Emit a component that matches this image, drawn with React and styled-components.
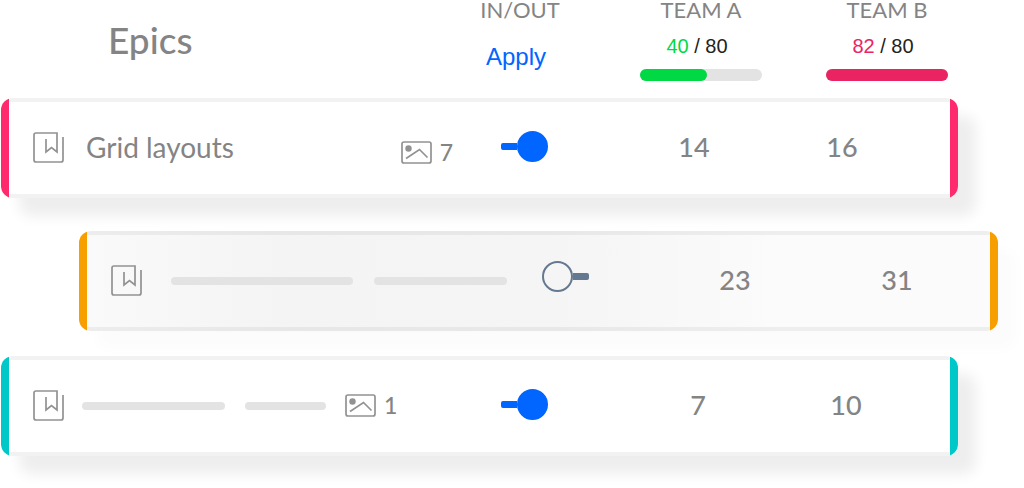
import React, { useState } from 'react';
import styled, { createGlobalStyle } from 'styled-components';

const GlobalStyle = createGlobalStyle`
  *,
  *::before,
  *::after {
    box-sizing: border-box;
  }

  body {
    margin: 0;
    background: #fff;
    color: #848484;
    font-family: Lato, 'Liberation Sans', sans-serif;
    overflow-x: hidden;
  }
`;

const Board = styled.main`
  width: 100%;
  padding-bottom: 31px;
`;

const Header = styled.header`
  display: flex;
  align-items: flex-start;
  padding: 0 76px 17px 108px;
`;

const Title = styled.h1`
  flex: 1;
  margin: 20px 0 0;
  font-size: 37px;
  font-weight: 500;
  line-height: 40px;
`;

const Column = styled.div`
  display: flex;
  flex-direction: column;
  align-items: center;
  width: ${({ $wide }) => ($wide ? '122px' : '80px')};
  margin-left: 64px;
  white-space: nowrap;

  &:first-of-type {
    margin-left: 0;
    margin-right: 16px;
  }
`;

const ColumnTitle = styled.h2`
  margin: 0;
  font-size: 22px;
  font-weight: 400;
  line-height: 20px;
`;

const ApplyButton = styled.button`
  margin-top: 23px;
  padding: 0 8px 0 0;
  border: 0;
  background: none;
  color: #0066ff;
  font-family: 'Liberation Sans', sans-serif;
  font-size: 24px;
  line-height: 28px;
  cursor: pointer;
`;

const Capacity = styled.div`
  margin-top: 14px;
  padding-right: 8px;
  color: #222;
  font-family: 'Liberation Sans', sans-serif;
  font-size: 20px;
  line-height: 24px;

  span {
    color: ${({ $color }) => $color};
  }
`;

const Track = styled.div`
  width: 100%;
  height: 12px;
  margin-top: 11px;
  border-radius: 6px;
  background: #e3e3e3;
`;

const Fill = styled.div`
  height: 100%;
  border-radius: 6px;
  background: ${({ $color }) => $color};
`;

const EpicList = styled.ul`
  margin: 0;
  padding: 0;
  list-style: none;
`;

const Card = styled.li`
  display: flex;
  height: 100px;
  margin: ${({ $shifted }) => ($shifted ? '33px 26px 25px 79px' : '0 66px 0 1px')};
  border-radius: 12px;
  overflow: hidden;
  background: ${({ $shifted }) =>
    $shifted
      ? 'linear-gradient(90deg, #fafafa 0%, #f4f4f4 22%, #f5f5f5 52%, #fbfbfb 76%)'
      : '#fff'};
  box-shadow: 18px 18px 14px
    ${({ $shifted }) => ($shifted ? 'rgba(0, 0, 0, 0.015)' : 'rgba(0, 0, 0, 0.07)')};
`;

const Edge = styled.div`
  flex: none;
  width: 8px;
  background: ${({ $color }) => $color};
`;

const CardBody = styled.div`
  display: flex;
  flex: 1;
  align-items: center;
  min-width: 0;
  padding: 0 ${({ $end }) => $end}px 2px 24px;
  border: solid rgba(0, 0, 0, 0.05);
  border-width: 4px 0;
`;

const Summary = styled.div`
  display: flex;
  flex: 1;
  align-items: center;
  min-width: 0;

  > svg {
    flex: none;
  }
`;

const EpicName = styled.span`
  margin-left: 22px;
  font-size: 28px;
  line-height: 32px;
  white-space: nowrap;
`;

const Placeholder = styled.span`
  flex: 0 1 ${({ $width }) => $width}px;
  height: 8px;
  margin-top: 2px;
  margin-left: ${({ $gap }) => $gap}px;
  border-radius: 4px;
  background: #e3e3e3;
`;

const Attachments = styled.span`
  display: flex;
  flex: none;
  align-items: center;
  gap: 8px;
  margin-left: ${({ $gap }) => ($gap ? `${$gap}px` : 'auto')};
  margin-right: ${({ $gap }) => ($gap ? 0 : '48px')};
  padding-top: ${({ $gap }) => ($gap ? 0 : '10px')};
  font-size: 23px;
  font-weight: 500;
  line-height: 24px;
`;

const Toggle = styled.input.attrs({ type: 'checkbox' })`
  appearance: none;
  display: flex;
  flex: none;
  align-items: center;
  flex-direction: row-reverse;
  width: 47px;
  height: 31px;
  margin: 0 0 8px;
  cursor: pointer;

  &::before {
    content: '';
    flex: 1;
    height: 7px;
    border-radius: 0 2px 2px 0;
    background: #64788f;
  }

  &::after {
    content: '';
    width: 31px;
    height: 31px;
    border: 2px solid #64788f;
    border-radius: 50%;
  }

  &:checked {
    flex-direction: row;
    margin-bottom: 2px;
  }

  &:checked::before {
    border-radius: 2px 0 0 2px;
    background: #0066ff;
  }

  &:checked::after {
    border-color: #0066ff;
    background: #0066ff;
  }
`;

const Score = styled.span`
  flex: none;
  width: 60px;
  margin-left: ${({ $gap }) => $gap}px;
  font-size: 27px;
  font-weight: 500;
  line-height: 32px;
  text-align: center;
`;

const EpicIcon = () => (
  <svg width="31" height="31" viewBox="0 0 31 31" fill="none" stroke="#929292" strokeWidth="1.7" aria-hidden="true">
    <path d="M13 7V20L18.500 15.500L24 20V1H3Q1 1 1 3V28Q1 30 3 30H28Q30 30 30 28V5" />
  </svg>
);

const ImageIcon = () => (
  <svg width="31" height="23" viewBox="0 0 31 23" fill="none" stroke="#929292" strokeWidth="1.7" aria-hidden="true">
    <rect x="1" y="1" width="29" height="21" rx="2" />
    <circle cx="7.500" cy="7.500" r="3.200" fill="#929292" stroke="none" />
    <path d="M5 17.500L18.500 8.500L26.500 16.500" />
  </svg>
);

const teams = [
  { name: 'TEAM A', used: 40, capacity: 80, fill: 55, color: '#00d943' },
  { name: 'TEAM B', used: 82, capacity: 80, fill: 100, color: '#ea2463' },
];

const epics = [
  {
    id: 'grid',
    name: 'Grid layouts',
    color: '#ff2a6d',
    attachments: 7,
    included: true,
    scores: [14, 16],
    gaps: [116, 88],
    end: 78,
  },
  {
    id: 'second',
    color: '#f79e00',
    lines: [
      { width: 182, gap: 29 },
      { width: 133, gap: 21 },
    ],
    included: false,
    shifted: true,
    scores: [23, 31],
    gaps: [116, 102],
    end: 63,
  },
  {
    id: 'third',
    color: '#00c8c8',
    lines: [
      { width: 143, gap: 18 },
      { width: 81, gap: 20 },
    ],
    attachments: 1,
    included: true,
    scores: [7, 10],
    gaps: [120, 88],
    end: 74,
  },
];

const EpicCard = ({ epic }) => {
  const [included, setIncluded] = useState(epic.included);

  return (
    <Card $shifted={epic.shifted}>
      <Edge $color={epic.color} />
      <CardBody $end={epic.end}>
        <Summary>
          <EpicIcon />
          {epic.name && <EpicName>{epic.name}</EpicName>}
          {epic.lines?.map((line, index) => (
            <Placeholder key={index} $width={line.width} $gap={line.gap} />
          ))}
          {epic.attachments && (
            <Attachments $gap={epic.lines ? 19 : 0}>
              <ImageIcon />
              {epic.attachments}
            </Attachments>
          )}
        </Summary>
        <Toggle
          aria-label="In or out"
          checked={included}
          onChange={(e) => setIncluded(e.target.checked)}
        />
        {epic.scores.map((score, index) => (
          <Score key={index} $gap={epic.gaps[index]}>
            {score}
          </Score>
        ))}
      </CardBody>
      <Edge $color={epic.color} />
    </Card>
  );
};

const App = () => (
  <>
    <GlobalStyle />
    <Board>
      <Header>
        <Title>Epics</Title>
        <Column>
          <ColumnTitle>IN/OUT</ColumnTitle>
          <ApplyButton type="button">Apply</ApplyButton>
        </Column>
        {teams.map((team) => (
          <Column key={team.name} $wide>
            <ColumnTitle>{team.name}</ColumnTitle>
            <Capacity $color={team.color}>
              <span>{team.used}</span> / {team.capacity}
            </Capacity>
            <Track>
              <Fill $color={team.color} style={{ width: `${team.fill}%` }} />
            </Track>
          </Column>
        ))}
      </Header>
      <EpicList>
        {epics.map((epic) => (
          <EpicCard key={epic.id} epic={epic} />
        ))}
      </EpicList>
    </Board>
  </>
);

export default App;
